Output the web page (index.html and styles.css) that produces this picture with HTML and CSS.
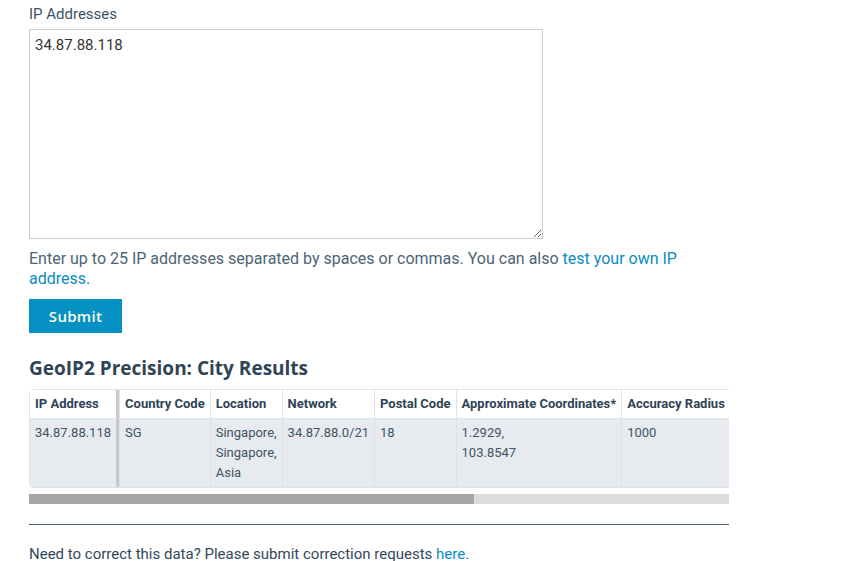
FILE: index.html
```html
<!DOCTYPE html>
<html lang="en">
<head>
    <meta charset="UTF-8">
    <meta name="viewport" content="width=device-width, initial-scale=1.0">
    <title>GeoIP2 Precision: City Demo</title>
    <link rel="stylesheet" href="styles.css">
</head>
<body>

<div class="page">
    <!-- Formulario de IPs -->
    <form class="lookup">
        <label for="ips" class="field-label">IP Addresses</label>
        <textarea id="ips" class="ip-box">34.87.88.118</textarea>
        <p class="help">Enter up to 25 IP addresses separated by spaces or commas. You can also <a href="#">test your own IP address</a>.</p>
        <button type="button" class="submit-btn">Submit</button>
    </form>

    <!-- Resultados -->
    <h2 class="results-title">GeoIP2 Precision: City Results</h2>
    <div class="table-scroll">
        <table class="results">
            <thead>
                <tr>
                    <th class="sticky">IP Address</th>
                    <th>Country Code</th>
                    <th>Location</th>
                    <th>Network</th>
                    <th>Postal Code</th>
                    <th>Approximate Coordinates*</th>
                    <th class="last">Accuracy Radius</th>
                </tr>
            </thead>
            <tbody>
                <tr>
                    <td class="sticky">34.87.88.118</td>
                    <td>SG</td>
                    <td>Singapore,<br>Singapore,<br>Asia</td>
                    <td>34.87.88.0/21</td>
                    <td>18</td>
                    <td>1.2929,<br>103.8547</td>
                    <td class="last">1000</td>
                </tr>
            </tbody>
        </table>
    </div>
    <!-- Barra de desplazamiento -->
    <div class="scroll-track">
        <div class="scroll-thumb" style="width: 445px;"></div>
    </div>

    <hr class="divider">

    <p class="footnote">Need to correct this data? Please submit correction requests <a href="#">here</a>.</p>
</div>

</body>
</html>
```

FILE: styles.css
```css
body {
    margin: 0;
    padding: 0;
    font-family: Roboto, "Liberation Sans", Arial, sans-serif;
    background-color: #ffffff;
    color: #4b6477;
}
a {
    color: #0a8cc2;
    text-decoration: none;
}
.page {
    width: 700px;
    padding: 4px 0 0 29px;
}
.lookup {
    margin: 0;
}
.field-label {
    display: block;
    font-size: 15px;
    line-height: 20px;
    color: #3d5264;
    margin-bottom: 5px;
}
.ip-box {
    display: block;
    box-sizing: border-box;
    width: 514px;
    height: 210px;
    padding: 6px 5px;
    border: 1px solid #cccccc;
    font-family: Roboto, "Liberation Sans", Arial, sans-serif;
    font-size: 15px;
    line-height: 18px;
    color: #333333;
    margin: 0;
    resize: vertical;
}
.help {
    font-size: 16px;
    line-height: 20px;
    margin: 10px 0 10px 0;
    color: #4b6477;
}
.submit-btn {
    display: block;
    width: 93px;
    height: 34px;
    padding: 0;
    border: none;
    background-color: #0591c4;
    color: #fdfbe6;
    font-family: "Open Sans", Lato, sans-serif;
    font-weight: 600;
    font-size: 15px;
    letter-spacing: 0.3px;
    cursor: pointer;
}
.results-title {
    font-family: "Open Sans", Lato, sans-serif;
    font-weight: 700;
    font-size: 19px;
    line-height: 24px;
    color: #2f4456;
    margin: 23px 0 9px 0;
}
.table-scroll {
    overflow: hidden;
}
.results {
    border-collapse: separate;
    border-spacing: 0;
    border: 1px solid #e0e3e6;
    border-radius: 4px;
    font-size: 13px;
    line-height: 20px;
    white-space: nowrap;
}
.results th,
.results td {
    padding: 4px 5px;
    text-align: left;
    vertical-align: top;
    border-left: 1px solid #e0e3e6;
}
.results th:first-child,
.results td:first-child {
    border-left: none;
}
.results th {
    background-color: #ffffff;
    color: #2f4456;
    font-weight: 700;
}
.results td {
    background-color: #e7ebef;
    color: #3f5465;
    border-top: 1px solid #e0e3e6;
}
.results tbody tr td:first-child {
    border-bottom-left-radius: 4px;
}
.results .sticky {
    border-right: 3px solid #c9c9c9;
}
.results .last {
    padding-right: 16px;
}
.scroll-track {
    height: 10px;
    margin-top: 6px;
    background-color: #dcdcdc;
}
.scroll-thumb {
    height: 100%;
    background-color: #a7a7a7;
}
.divider {
    border: none;
    border-top: 1px solid #4f6272;
    margin: 20px 0 0 0;
}
.footnote {
    font-size: 15px;
    line-height: 20px;
    margin: 19px 0 0 0;
    color: #33485a;
}
```
